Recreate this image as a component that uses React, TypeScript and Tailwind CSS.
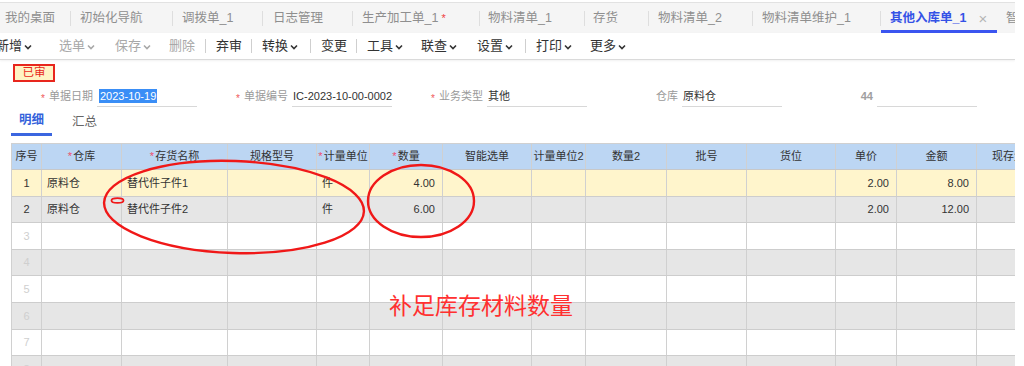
import React from 'react';

const FONT = '"Liberation Sans", "Noto Sans CJK SC", sans-serif';

const tabs = [
  { label: '我的桌面', w: 'w-[71px]', pl: 'pl-[5px]' },
  { label: '初始化导航', w: 'w-[102px]', pl: 'pl-[9px]' },
  { label: '调拨单_1', w: 'w-[90px]', pl: 'pl-[9px]' },
  { label: '日志管理', w: 'w-[90px]', pl: 'pl-[10px]' },
  { label: '生产加工单_1', w: 'w-[127px]', pl: 'pl-[9px]', dirty: true },
  { label: '物料清单_1', w: 'w-[105px]', pl: 'pl-[8px]' },
  { label: '存货', w: 'w-[64px]', pl: 'pl-[8px]' },
  { label: '物料清单_2', w: 'w-[104px]', pl: 'pl-[9px]' },
  { label: '物料清单维护_1', w: 'w-[128px]', pl: 'pl-[9px]' },
];

const toolbar = [
  { label: '新增', w: 'w-[63px]', menu: true, dim: false, ml: 'ml-[-4px]' },
  { label: '选单', w: 'w-[56px]', menu: true, dim: true },
  { label: '保存', w: 'w-[54px]', menu: true, dim: true },
  { label: '删除', w: 'w-[36px]', dim: true },
  { sep: true },
  { label: '弃审', w: 'w-[35px]' },
  { sep: true },
  { label: '转换', w: 'w-[48px]', menu: true },
  { sep: true },
  { label: '变更', w: 'w-[35px]' },
  { sep: true },
  { label: '工具', w: 'w-[54px]', menu: true },
  { label: '联查', w: 'w-[56px]', menu: true },
  { label: '设置', w: 'w-[48px]', menu: true },
  { sep: true },
  { label: '打印', w: 'w-[54px]', menu: true },
  { label: '更多', w: 'w-[50px]', menu: true },
];

const fields = [
  { label: '单据日期', req: true, value: '2023-10-19', selected: true },
  { label: '单据编号', req: true, value: 'IC-2023-10-00-0002' },
  { label: '业务类型', req: true, value: '其他' },
  { label: '仓库', value: '原料仓' },
  { label: '44', value: '' },
];

const cols = [
  { title: '序号', w: 'w-[30px]' },
  { title: '仓库', w: 'w-[80px]', req: true },
  { title: '存货名称', w: 'w-[106px]', req: true },
  { title: '规格型号', w: 'w-[89px]' },
  { title: '计量单位', w: 'w-[53px]', req: true },
  { title: '数量', w: 'w-[73px]', req: true, num: true },
  { title: '智能选单', w: 'w-[89px]' },
  { title: '计量单位2', w: 'w-[54px]' },
  { title: '数量2', w: 'w-[81px]' },
  { title: '批号', w: 'w-[80px]' },
  { title: '货位', w: 'w-[89px]' },
  { title: '单价', w: 'w-[61px]', num: true },
  { title: '金额', w: 'w-[80px]', num: true },
  { title: '现存量', w: 'w-[64px]' },
];

const rows = [
  ['原料仓', '替代件子件1', '', '件', '4.00', '', '', '', '', '', '2.00', '8.00', ''],
  ['原料仓', '替代件子件2', '', '件', '6.00', '', '', '', '', '', '2.00', '12.00', ''],
];

const rowBg = ['bg-[#fff5cc]', 'bg-[#e6e6e6]', 'bg-white', 'bg-[#e6e6e6]', 'bg-white', 'bg-[#e6e6e6]', 'bg-white', 'bg-[#e6e6e6]'];

function Chevron() {
  return (
    <svg width="8" height="6" viewBox="0 0 8 6" className="ml-[2px] mt-[1px]">
      <polyline points="1,1.5 4,4.5 7,1.5" fill="none" stroke="currentColor" strokeWidth="1.6" />
    </svg>
  );
}

export default function App() {
  return (
    <div className="relative w-[1024px] h-[366px] bg-white overflow-hidden text-[#333]" style={{ fontFamily: FONT }}>
      <div className="w-[1015px] overflow-hidden">
        {/* tab bar */}
        <div className="mt-[2px] border-t border-[#e2e2e2] h-[31px] bg-[#f5f5f5] flex items-stretch text-[12.5px] text-[#8f8f8f]">
          {tabs.map((t, i) => (
            <div key={i} className={`${t.w} shrink-0 flex items-center`}>
              <div className={`flex-1 flex items-center ${t.pl} whitespace-nowrap`}>
                {t.label}
                {t.dirty && <span className="text-[#f04040] ml-[3px] text-[11px]">*</span>}
              </div>
              <div className="w-px h-[15px] bg-[#dedede]" />
            </div>
          ))}
          <div className="w-[116px] shrink-0 flex items-center border-b-[3px] border-[#3b55f0] pt-[3px]">
            <span className="pl-[9px] font-bold text-[#3452e6] whitespace-nowrap">其他入库单_1</span>
            <span className="ml-[12px] text-[#b5b5b5] text-[15px] leading-none">×</span>
          </div>
          <div className="w-px h-[15px] bg-[#dedede] self-center" />
          <div className="pl-[9px] flex items-center whitespace-nowrap">智能</div>
        </div>

        {/* toolbar */}
        <div className="h-[27px] border-b border-[#dadada] shadow-[0_1px_2px_rgba(0,0,0,0.06)] flex items-center text-[13px] text-[#333]">
          {toolbar.map((b, i) =>
            b.sep ? (
              <div key={i} className="w-[11px] shrink-0 flex items-center">
                <div className="w-px h-[14px] bg-[#cfcfcf]" />
              </div>
            ) : (
              <div key={i} className={`${b.w} ${b.ml ?? ''} shrink-0 flex items-center whitespace-nowrap ${b.dim ? 'text-[#a8a8a8]' : ''}`}>
                {b.label}
                {b.menu && <Chevron />}
              </div>
            )
          )}
        </div>

        {/* status stamp */}
        <div className="pl-[13px] pt-[4px]">
          <div className="w-[42px] h-[18px] border-2 border-[#e8261d] bg-[#fff3c4] text-[#e8261d] text-[11.5px] flex items-center justify-center">
            已审
          </div>
        </div>

        {/* fields */}
        <div className="flex pl-[2px] mt-[4px] h-[21px] text-[11px]">
          {fields.map((f, i) => (
            <div key={i} className="w-[195px] shrink-0 flex items-stretch">
              <div className="w-[95px] pr-[4px] flex items-center justify-end text-[#9a9a9a]">
                {f.req && <span className="text-[#f05a5a] mr-[4px] mt-[3px] text-[10px]">*</span>}
                <span className={f.label === '44' ? 'text-[#a0a0a0] font-bold' : ''}>{f.label}</span>
              </div>
              <div className="w-[100px] border-b border-[#d8d8d8] flex items-center text-[#333] whitespace-nowrap">
                {f.selected ? (
                  <span className="ml-[2px] bg-[#3a8ef6] text-white leading-[14px] px-[1px]">{f.value}</span>
                ) : (
                  <span className="ml-[1px]">{f.value}</span>
                )}
              </div>
            </div>
          ))}
        </div>

        {/* sub tabs */}
        <div className="flex pl-[11px] h-[29px] text-[12.5px]">
          <div className="w-[41px] flex items-center justify-center border-b-[3px] border-[#3b66e0] text-[#3462db] font-bold pt-[1px]">明细</div>
          <div className="ml-[20px] flex items-center text-[#666] pt-[1px]">汇总</div>
        </div>

        {/* grid */}
        <div className="mt-[7px] ml-[11px] border-l border-t border-[#d0d0d0] text-[11px]">
          <div className="flex h-[26px] bg-[#bcd6f3] border-b border-[#c8c8c8]">
            {cols.map((c, i) => (
              <div key={i} className={`${c.w} shrink-0 border-r border-[#d0d0d0] flex items-center justify-center whitespace-nowrap overflow-hidden`}>
                {c.req && <span className="text-[#f0506e] mr-[1px]">*</span>}
                {c.title}
              </div>
            ))}
          </div>
          {rowBg.map((bg, r) => (
            <div key={r} className={`flex h-[26.6px] border-b border-[#cdcdcd] ${bg}`}>
              <div className={`w-[30px] shrink-0 border-r border-[#d0d0d0] flex items-center justify-center ${r < 2 ? 'text-[#333]' : 'text-[#cfcfcf]'}`}>
                {r + 1}
              </div>
              {cols.slice(1).map((c, ci) => (
                <div
                  key={ci}
                  className={`${c.w} shrink-0 border-r border-[#d0d0d0] flex items-center whitespace-nowrap overflow-hidden ${c.num ? 'justify-end pr-[7px]' : 'pl-[5px]'}`}
                >
                  {rows[r]?.[ci] ?? ''}
                </div>
              ))}
            </div>
          ))}
        </div>
      </div>

      {/* hand-drawn annotations */}
      <svg className="absolute left-0 top-0 pointer-events-none" width="1024" height="366">
        <ellipse cx="234" cy="207" rx="130" ry="46" fill="none" stroke="#f01818" strokeWidth="2.4" transform="rotate(2 234 207)" />
        <ellipse cx="421" cy="201" rx="53" ry="36" fill="none" stroke="#f01818" strokeWidth="2.4" />
        <ellipse cx="117.5" cy="200.5" rx="6" ry="2.4" fill="none" stroke="#f01818" strokeWidth="1.8" />
      </svg>
      <div className="absolute left-[389px] top-[291px] text-[23px] leading-[30px] text-[#ff3030] whitespace-nowrap">
        补足库存材料数量
      </div>
    </div>
  );
}
